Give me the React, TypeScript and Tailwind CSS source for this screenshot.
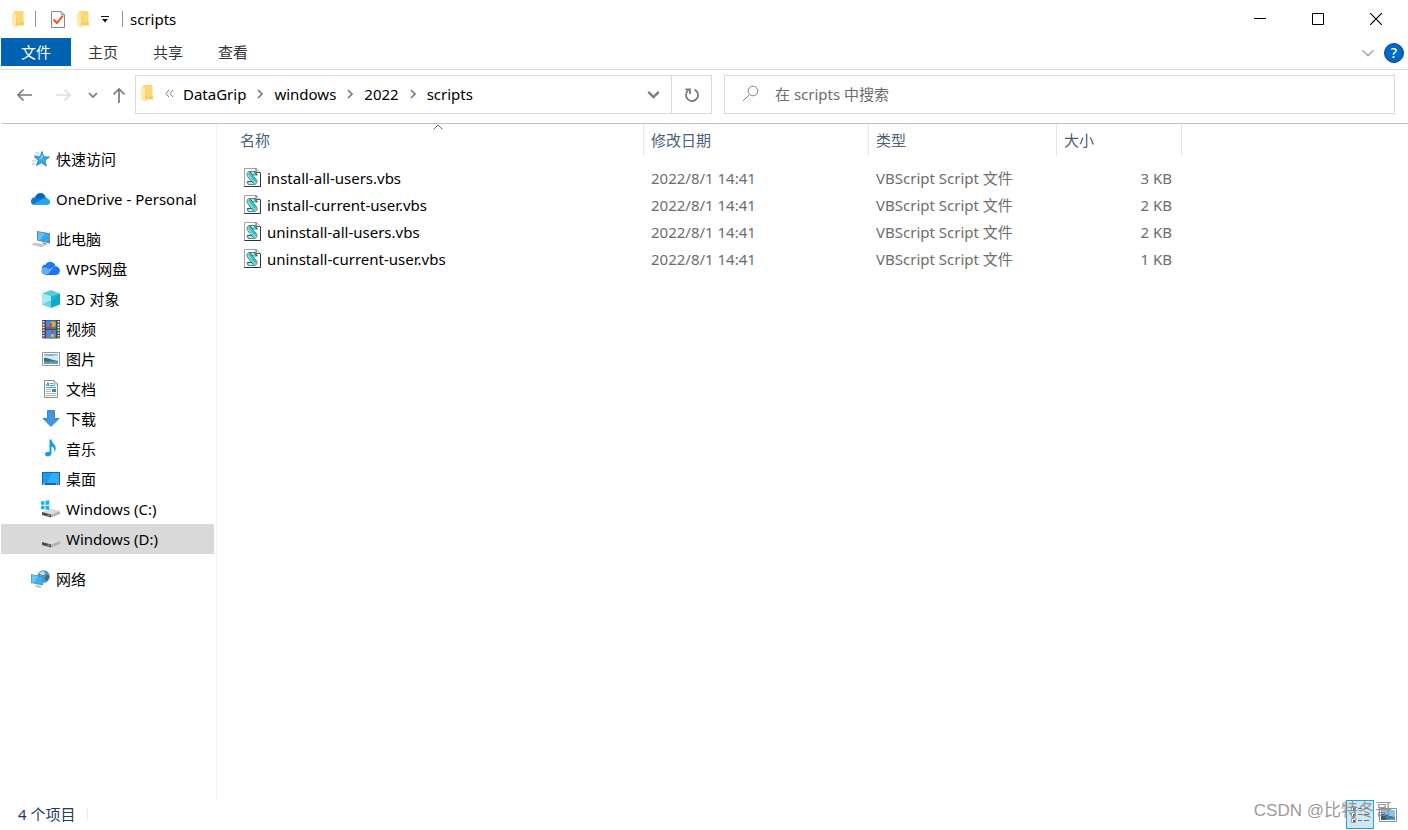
import type { ReactNode } from 'react';
import clsx from 'clsx';

interface NavItem {
  label: string;
  icon: ReactNode;
  selected?: boolean;
}

interface NavSection extends NavItem {
  children?: NavItem[];
}

/* ---------- icons ---------- */

function FolderIcon() {
  return (
    <svg width="12" height="17" viewBox="0 0 12 17" className="shrink-0">
      <path d="M2 0H11.5V13.5H2Z" fill="#fbd877" />
      <path d="M9 10.5H12V14.5H9Z" fill="#f6cc63" />
      <path d="M0 1.5L4 3.5V17L0 14.5Z" fill="#ffeaa6" />
      <path d="M4 3.5V17L5 14.5H9V12H5Z" fill="#f4cb65" />
    </svg>
  );
}

function PropertiesIcon() {
  return (
    <svg width="16" height="19" viewBox="0 0 16 19" fill="none">
      <path d="M1.5 1.5H11L14.5 4.5V17.5H1.5Z" fill="#fafafa" stroke="#8a8a8a" />
      <path d="M11 1.5V4.5H14.5" stroke="#a8a8a8" />
      <path d="M3.5 9.5L7 13L13 5.5" stroke="#e8581c" strokeWidth="2" />
    </svg>
  );
}

function Chevron({ dir, size = 10, color = '#7a7a7a', weight = 1.7 }: { dir: 'down' | 'right'; size?: number; color?: string; weight?: number }) {
  return (
    <svg width={size} height={size} viewBox="0 0 10 10" fill="none" stroke={color} strokeWidth={weight} className="shrink-0">
      <path d={dir === 'down' ? 'M1 3L5 7L9 3' : 'M3 1L7 5L3 9'} />
    </svg>
  );
}

function ArrowIcon({ dir, color }: { dir: 'left' | 'right' | 'up'; color: string }) {
  const paths = {
    left: 'M16 9H2M7.5 3.5L2 9L7.5 14.5',
    right: 'M2 9H16M10.5 3.5L16 9L10.5 14.5',
    up: 'M9 17V3M3.5 8.5L9 3L14.5 8.5',
  };
  return (
    <svg width="18" height="18" viewBox="0 0 18 18" fill="none" stroke={color} strokeWidth="1.7">
      <path d={paths[dir]} />
    </svg>
  );
}

function RefreshIcon() {
  return (
    <svg width="16" height="16" viewBox="0 0 16 16" fill="none" stroke="#7a7a7a" strokeWidth="1.8">
      <path d="M10.5 2.6A6 6 0 1 1 4 3.6" />
      <path d="M1.5 2.5H6V7" />
    </svg>
  );
}

function SearchIcon() {
  return (
    <svg width="17" height="17" viewBox="0 0 17 17" fill="none" stroke="#858585">
      <circle cx="11" cy="6" r="4.8" />
      <path d="M7.5 9.5L1 16" />
    </svg>
  );
}

function QuickAccessIcon() {
  return (
    <svg width="20" height="20" viewBox="0 0 20 20">
      <path d="M5 4H9M4 6.5H8M2 12H6M2 15H5" stroke="#8ecbf0" />
      <path d="M12 2.5L13.8 7.8L19.5 8L15 11.3L16.3 17L11.5 13.8L6.5 16.5L8.3 11.3L4.3 7.8L10 7.7Z" fill="#37a9ea" stroke="#1877b8" strokeWidth="0.8" />
      <path d="M12 4.5L13 8.5L9 11L10.5 8.5Z" fill="#7fd0f8" />
    </svg>
  );
}

function OneDriveIcon() {
  return (
    <svg width="20" height="20" viewBox="0 0 20 20">
      <path d="M5 8.5C6 4 12 2 15 6.5L16 9L10 12L4.5 9Z" fill="#0364b8" />
      <path d="M5 16C-0.5 16-0.5 8 5.5 8.3L12.5 12L6 16Z" fill="#0f78d4" />
      <path d="M11 10.8C12.5 7.5 15.5 7.5 17 9.2L18 12L13 13Z" fill="#1490df" />
      <path d="M3 15.3L11.5 10.7L17 9.5C21 10 21.2 16 17 16H5Q4 16 3 15.3Z" fill="#28a8ea" />
    </svg>
  );
}

function ComputerIcon() {
  return (
    <svg width="20" height="20" viewBox="0 0 20 20">
      <path d="M7 2L20 4.2V14.5L7 11.5Z" fill="#6e7f8c" />
      <path d="M8 3.2L19.2 5V13.4L8 10.8Z" fill="#2fa9f2" />
      <path d="M8 3.2L15 4.3L10 11.2L8 10.8Z" fill="#62c3f8" />
      <path d="M13 13L17 14L16 16.5L12 15Z" fill="#aab1b6" />
      <path d="M4 13.2L15 16.3L12 18.5L1 15.8Z" fill="#d5d8da" />
      <path d="M3 15L12 17.3M5.5 14.3L13.5 16.4" stroke="#a8adb1" strokeWidth="0.6" />
    </svg>
  );
}

function WpsCloudIcon() {
  return (
    <svg width="20" height="20" viewBox="0 0 20 20">
      <path d="M2 10.5C1.5 6.5 4 5.5 5.5 5.8C7 1.8 13.5 1.5 15.5 6.5L12 9L7 12L2.5 14Z" fill="#1c7bf2" />
      <path d="M2.5 9C4 7.5 7 8 9 10.3L12.5 16H6C1.5 16 0 12 2.5 9Z" fill="#5bafff" />
      <path d="M6 16L11 9.5C14 5.5 20.5 7.5 19.8 12.5C19.5 15 17.5 16 15.5 16Z" fill="#2174ee" />
      <path d="M7 14.8C9.5 14 10 9.8 13 8.8" stroke="#d8ebff" strokeWidth="0.7" fill="none" />
    </svg>
  );
}

function CubeIcon() {
  return (
    <svg width="20" height="20" viewBox="0 0 20 20">
      <path d="M2 4.5L11 1L20 4.5L11 7.5Z" fill="#57c9dc" />
      <path d="M2 4.5L11 7.5V19L2 15.5Z" fill="#a5ebf2" />
      <path d="M20 4.5L11 7.5V19L20 15.5Z" fill="#12a9c4" />
      <path d="M2 15.5L11 11V19Z" fill="#6ad6e6" />
      <path d="M20 4.5L11 13V7.5Z" fill="#1fb2cc" />
    </svg>
  );
}

function VideoIcon() {
  return (
    <svg width="20" height="20" viewBox="0 0 20 20">
      <path d="M2 1H20V19.5H2Z" fill="#474747" />
      <path d="M3.5 2V19.5M18.5 2V19.5" stroke="#e8e8e8" strokeWidth="2" strokeDasharray="1.6 1.2" />
      <path d="M6 1.5H16V9.5H6ZM6 11H16V19H6Z" fill="#4a86e2" />
      <circle cx="13" cy="5" r="2.6" fill="#e2b32b" />
      <path d="M6 8H11L12 9.5H6ZM10 4.5H12V7H10ZM11 12H14L12.5 15Z" fill="#d33b35" />
      <path d="M12 8H16V9.5H12ZM11 17H16V19H11Z" fill="#4c9a3e" />
      <circle cx="12.5" cy="16.5" r="1.5" fill="#efc53a" />
    </svg>
  );
}

function PictureIcon() {
  return (
    <svg width="20" height="20" viewBox="0 0 20 20">
      <path d="M2.5 3.5H19.5V16.5H2.5Z" fill="#fff" stroke="#969696" />
      <path d="M4 5H18V15H4Z" fill="#d3eafa" />
      <path d="M4 9C7 8 10 11 18 12V13H4Z" fill="#3c7165" />
      <path d="M4 12.5H18V15H4Z" fill="#5b9fc4" />
      <path d="M4 5H18V6L11 7L4 6.5Z" fill="#72b6e6" />
    </svg>
  );
}

function DocumentIcon() {
  return (
    <svg width="20" height="20" viewBox="0 0 20 20" fill="none">
      <path d="M4.5 1.5H14L17.5 5V18.5H4.5Z" fill="#fff" stroke="#8c8c8c" />
      <path d="M14 1.5V5H17.5" stroke="#9a9a9a" />
      <path d="M6 7L8 3.5L9 7M6.5 6H9" stroke="#2b87c8" />
      <path d="M10 4.5H13M10 6.5H15M6 8.5H16" stroke="#42a0da" />
      <path d="M6 10.5H11M6 12.5H11M6 14.5H16M6 16.5H16" stroke="#b0b0b0" />
      <path d="M12 10H16V13H12Z" fill="#3e86ba" />
    </svg>
  );
}

function DownloadIcon() {
  return (
    <svg width="20" height="20" viewBox="0 0 20 20">
      <path d="M7.5 1.5H14.5V9.5H19L11 17.5L3 9.5H7.5Z" fill="#3f97e6" stroke="#2673bd" strokeWidth="0.8" />
    </svg>
  );
}

function MusicIcon() {
  return (
    <svg width="20" height="20" viewBox="0 0 20 20">
      <path d="M9.5 0.5H11.5C11.5 4.5 16 5.5 15.8 9.5C15.7 11 15 12 14 13C15 9.5 13.5 8 11.5 7.5V14.5C11.5 18 5 18.5 5 15.3C5 13.2 7.5 12.2 9.5 13Z" fill="#109bf3" />
    </svg>
  );
}

function DesktopIcon() {
  return (
    <svg width="20" height="20" viewBox="0 0 20 20">
      <path d="M2 3H20V16H2Z" fill="#0f6cab" />
      <path d="M3 4H19V14H3Z" fill="#1a9bf6" />
      <path d="M12 4H19V14H7Z" fill="#35acfb" />
      <path d="M3 15H5M16 15H17M18 15H19" stroke="#fff" />
    </svg>
  );
}

function DriveIcon({ system }: { system?: boolean }) {
  return (
    <svg width="20" height="20" viewBox="0 0 20 20">
      <path d="M2 13L11 9.5L20 12L11 15.5Z" fill="#dcdcdc" />
      <path d="M2 13L11 15.5V18.5L2 16Z" fill="#4b4b4b" />
      <path d="M11 15.5L20 12V15L11 18.5Z" fill="#b3b3b3" />
      <path d="M7.5 16L9.5 16.7" stroke="#45d45b" strokeWidth="1.4" />
      {system && (
        <>
          <path d="M0 1H10V11H0Z" fill="#fff" />
          <path d="M1 2.5L4.5 2V5.8H1ZM5.5 1.8L9.3 1.3V5.8H5.5ZM1 6.8H4.5V10.5L1 10ZM5.5 6.8H9.3V11L5.5 10.5Z" fill="#13b5ee" />
        </>
      )}
    </svg>
  );
}

function NetworkIcon() {
  return (
    <svg width="20" height="20" viewBox="0 0 20 20">
      <circle cx="13.5" cy="7.5" r="6.3" fill="#4f94b5" />
      <path d="M9 4C12 1 16 2 15 5C14 7 10 6 9 4Z" fill="#b9dbe6" />
      <path d="M16 6L19.5 7L17 12L15 10Z" fill="#2b6b91" />
      <path d="M1 5L13 7.5V16.5L1 14Z" fill="#5c8fb0" />
      <path d="M1.8 6L12.2 8.2V15.5L1.8 13.3Z" fill="#36b1f4" />
      <path d="M1.8 6L8 7.3L4 13.8L1.8 13.3Z" fill="#6bc9f8" />
      <path d="M6 16L12 17.3L10 19L5 17.6Z" fill="#b7bec2" />
    </svg>
  );
}

function ScriptIcon() {
  return (
    <svg width="18" height="20" viewBox="0 0 18 20" fill="none" className="shrink-0">
      <path d="M0.5 0.5H12.5L16.5 4.5V18.5H0.5Z" fill="#fff" stroke="#a3a3a3" />
      <path d="M16.5 5V18.5H0.5" stroke="#333" />
      <path d="M12 0.5V4.5H16.5" fill="#e6e6e6" stroke="#555" />
      {/* curled scroll */}
      <path d="M5 3.5H11L13.5 7H8.5L12.5 11.5C14 14 12.5 16.5 10 16.5H4L3 13.5H7.5L4 9C2 6.5 3 4 5 3.5Z" fill="#72dedb" stroke="#5f8588" />
      <path d="M5 5L10.5 12.5M7.5 5L12 13.5" stroke="#2cb7b8" strokeWidth="1.2" />
      <path d="M5.5 3.5L8.5 7M10 3.5L13 7" stroke="#42575a" />
      <path d="M8 5H10M5 15H9" stroke="#effffe" />
      <path d="M3.5 13.5H8L9.5 15.5" stroke="#42575a" />
    </svg>
  );
}

function DetailsViewIcon() {
  return (
    <svg width="20" height="20" viewBox="0 0 20 20" fill="none">
      <path d="M1.5 1.5H5.5V5.5H1.5ZM1.5 7.5H5.5V11.5H1.5ZM1.5 13.5H5.5V17.5H1.5Z" fill="#fff" stroke="#9d9d9d" />
      <path d="M3 3H5V5H3Z" fill="#2f72b5" />
      <path d="M3 9H5V11H3Z" fill="#37834a" />
      <path d="M3 15H5V17H3Z" fill="#c72b1b" />
      <path d="M8 3.5H12M14 3.5H19M8 9.5H12M14 9.5H19M8 15.5H12M14 15.5H19" stroke="#737373" />
    </svg>
  );
}

function LargeViewIcon() {
  return (
    <svg width="18" height="14" viewBox="0 0 18 14">
      <path d="M0.5 0.5H17.5V13.5H0.5Z" fill="#fff" stroke="#8f8f8f" />
      <path d="M2 2H16V12H2Z" fill="#86c3ee" />
      <path d="M2 6C6 5 10 9 16 9V12H2Z" fill="#30607c" />
      <path d="M9 10.5L16 9V12H6Z" fill="#4b9bc7" />
    </svg>
  );
}

/* ---------- data ---------- */

const sections: NavSection[] = [
  { label: '快速访问', icon: <QuickAccessIcon /> },
  { label: 'OneDrive - Personal', icon: <OneDriveIcon /> },
  {
    label: '此电脑',
    icon: <ComputerIcon />,
    children: [
      { label: 'WPS网盘', icon: <WpsCloudIcon /> },
      { label: '3D 对象', icon: <CubeIcon /> },
      { label: '视频', icon: <VideoIcon /> },
      { label: '图片', icon: <PictureIcon /> },
      { label: '文档', icon: <DocumentIcon /> },
      { label: '下载', icon: <DownloadIcon /> },
      { label: '音乐', icon: <MusicIcon /> },
      { label: '桌面', icon: <DesktopIcon /> },
      { label: 'Windows (C:)', icon: <DriveIcon system /> },
      { label: 'Windows (D:)', icon: <DriveIcon />, selected: true },
    ],
  },
  { label: '网络', icon: <NetworkIcon /> },
];

const files = [
  { name: 'install-all-users.vbs', date: '2022/8/1 14:41', type: 'VBScript Script 文件', size: '3 KB' },
  { name: 'install-current-user.vbs', date: '2022/8/1 14:41', type: 'VBScript Script 文件', size: '2 KB' },
  { name: 'uninstall-all-users.vbs', date: '2022/8/1 14:41', type: 'VBScript Script 文件', size: '2 KB' },
  { name: 'uninstall-current-user.vbs', date: '2022/8/1 14:41', type: 'VBScript Script 文件', size: '1 KB' },
];

const breadcrumbs = ['DataGrip', 'windows', '2022', 'scripts'];

/* ---------- layout ---------- */

function TitleBar() {
  return (
    <header className="flex h-[38px] items-center justify-between pr-[3px]">
      <div className="flex items-center pl-3">
        <FolderIcon />
        <span className="ml-[11px] h-4 w-px bg-[#8f8f8f]" />
        <button className="ml-3.5" aria-label="属性">
          <PropertiesIcon />
        </button>
        <button className="ml-[11px]" aria-label="新建文件夹">
          <FolderIcon />
        </button>
        <button className="ml-3 flex w-2 justify-center" aria-label="自定义快速访问工具栏">
          <svg width="8" height="8" viewBox="0 0 8 8">
            <path d="M0 1.5H8" stroke="#111" />
            <path d="M1 4H7L4 7.5Z" fill="#111" />
          </svg>
        </button>
        <span className="mr-[7px] ml-[13px] h-4 w-px bg-[#8f8f8f]" />
        <h1>scripts</h1>
      </div>
      <div className="flex h-full">
        <button className="flex w-[58px] items-center justify-center" aria-label="最小化">
          <svg width="12" height="12" viewBox="0 0 12 12" stroke="#000">
            <path d="M0 5.5H12" />
          </svg>
        </button>
        <button className="flex w-[58px] items-center justify-center" aria-label="最大化">
          <svg width="12" height="12" viewBox="0 0 12 12" stroke="#000" fill="none">
            <path d="M0.5 0.5H11.5V11.5H0.5Z" />
          </svg>
        </button>
        <button className="flex w-[58px] items-center justify-center" aria-label="关闭">
          <svg width="12" height="12" viewBox="0 0 12 12" stroke="#000" strokeWidth="1.2">
            <path d="M0 0L12 12M12 0L0 12" />
          </svg>
        </button>
      </div>
    </header>
  );
}

function Ribbon() {
  return (
    <nav className="flex h-8 items-start justify-between border-b border-[#dadbdc] pr-1 pl-px text-[#333]">
      <div className="flex h-7">
        <button className="w-[70px] bg-[#0063b1] text-white">文件</button>
        <button className="w-16">主页</button>
        <button className="w-[66px]">共享</button>
        <button className="w-16">查看</button>
      </div>
      <div className="flex h-7 items-center gap-[9px] pt-0.5">
        <button aria-label="展开功能区">
          <Chevron dir="down" size={14} color="#a3a3a3" weight={1} />
        </button>
        <button
          className="flex size-5 items-center justify-center rounded-full border border-[#0a4a86] bg-[#0067c8] text-sm font-medium text-white"
          aria-label="帮助"
        >
          ?
        </button>
      </div>
    </nav>
  );
}

function AddressRow() {
  return (
    <div className="ml-0.5 flex h-[54px] border-b border-[#bfbfbf] pt-[5px] pr-[13px] pb-[9px]">
      <div className="flex w-[133px] shrink-0 items-center pl-3.5">
        <button aria-label="后退">
          <ArrowIcon dir="left" color="#7a7a7a" />
        </button>
        <button className="ml-5" aria-label="前进">
          <ArrowIcon dir="right" color="#dcdcdc" />
        </button>
        <button className="ml-4" aria-label="最近浏览的位置">
          <Chevron dir="down" />
        </button>
        <button className="ml-3" aria-label="上移">
          <ArrowIcon dir="up" color="#7a7a7a" />
        </button>
      </div>
      <div className="flex flex-[575_1_0%] border border-[#d9d9d9]">
        <div className="flex flex-1 items-center pb-0.5 pl-[5px]">
          <FolderIcon />
          <svg width="9" height="9" viewBox="0 0 9 9" fill="none" stroke="#7a7a7a" className="ml-3">
            <path d="M4 1L1 4.5L4 8M8 1L5 4.5L8 8" />
          </svg>
          <ol className="ml-[9px] flex items-center">
            {breadcrumbs.map((crumb, i) => (
              <li key={crumb} className="flex items-center">
                {i > 0 && (
                  <span className="mx-[9px]">
                    <Chevron dir="right" />
                  </span>
                )}
                <a href="#">{crumb}</a>
              </li>
            ))}
          </ol>
        </div>
        <button className="flex w-9 items-center justify-center" aria-label="以前的位置">
          <Chevron dir="down" size={13} />
        </button>
        <button className="flex w-10 items-center justify-center border-l border-[#d9d9d9]" aria-label="刷新">
          <RefreshIcon />
        </button>
      </div>
      <label className="ml-3 flex flex-[669_1_0%] items-center border border-[#d9d9d9] pb-0.5">
        <span className="mr-4 ml-[17px]">
          <SearchIcon />
        </span>
        <input
          type="search"
          aria-label="搜索"
          placeholder="在 scripts 中搜索"
          className="min-w-0 flex-1 outline-none placeholder:text-[#6d6d6d]"
        />
      </label>
    </div>
  );
}

function NavLink({ item, nested }: { item: NavItem; nested?: boolean }) {
  return (
    <a
      href="#"
      className={clsx(
        'flex h-[30px] items-center gap-1.5 whitespace-nowrap',
        nested ? 'pl-[39px]' : 'pl-[29px]',
        item.selected && 'bg-[#d9d9d9]'
      )}
    >
      {item.icon}
      {item.label}
    </a>
  );
}

function Sidebar() {
  return (
    <nav className="w-[217px] shrink-0 border-r border-[#f2f2f2] pt-5 pr-0.5 pl-px">
      <ul className="flex flex-col gap-2.5">
        {sections.map((section) => (
          <li key={section.label}>
            <NavLink item={section} />
            {section.children && (
              <ul>
                {section.children.map((child) => (
                  <li key={child.label}>
                    <NavLink item={child} nested />
                  </li>
                ))}
              </ul>
            )}
          </li>
        ))}
      </ul>
    </nav>
  );
}

function FileTable() {
  return (
    <main className="flex-1 pl-4">
      <table className="w-[949px] table-fixed border-separate border-spacing-0 text-left text-[#6d6d6d]">
        <thead className="text-[#4c607a]">
          <tr className="h-8">
            <th className="relative w-[411px] border-r border-[#e5e5e5] pl-[7px] font-normal" aria-sort="ascending">
              名称
              <svg width="10" height="6" viewBox="0 0 10 6" fill="none" stroke="#6a6a6a" className="absolute top-0 left-1/2 -translate-x-1/2">
                <path d="M0.5 5.5L5 1L9.5 5.5" />
              </svg>
            </th>
            <th className="w-[225px] border-r border-[#e5e5e5] pl-[7px] font-normal">修改日期</th>
            <th className="w-[188px] border-r border-[#e5e5e5] pl-[7px] font-normal">类型</th>
            <th className="w-[125px] border-r border-[#e5e5e5] pl-[7px] font-normal">大小</th>
          </tr>
        </thead>
        <tbody className="before:block before:h-2">
          {files.map((file) => (
            <tr key={file.name} className="h-[27px]">
              <td className="pl-[11px] text-black">
                <div className="flex items-center gap-[5px]">
                  <ScriptIcon />
                  {file.name}
                </div>
              </td>
              <td className="pl-[7px]">{file.date}</td>
              <td className="pl-[7px]">{file.type}</td>
              <td className="pr-2.5 text-right">{file.size}</td>
            </tr>
          ))}
        </tbody>
      </table>
    </main>
  );
}

function StatusBar() {
  return (
    <footer className="relative flex h-[31px] items-center justify-between pr-[11px] pl-[18px]">
      <div className="flex items-center gap-3 pb-0.5 text-[#1f3a5f]">
        <span>4 个项目</span>
        <span className="h-3.5 w-px bg-[#ededed]" />
      </div>
      <div className="flex items-center gap-[5px]">
        <button className="flex h-[29px] w-7 items-center justify-center border border-[#26a0da] bg-[#cce8f6]" aria-label="详细信息">
          <DetailsViewIcon />
        </button>
        <button aria-label="大图标">
          <LargeViewIcon />
        </button>
      </div>
      <span className="pointer-events-none absolute top-0 right-4 text-[17px] leading-6 text-[#8c8c8c]/90 font-['Liberation_Sans','Noto_Sans_CJK_SC',sans-serif]">
        CSDN @比特冬哥
      </span>
    </footer>
  );
}

export default function App() {
  return (
    <div className="flex min-h-screen flex-col bg-white font-['Noto_Sans','Noto_Sans_CJK_SC',sans-serif] text-[15px] leading-5 text-black">
      <TitleBar />
      <Ribbon />
      <AddressRow />
      <div className="flex flex-1">
        <Sidebar />
        <FileTable />
      </div>
      <StatusBar />
    </div>
  );
}
